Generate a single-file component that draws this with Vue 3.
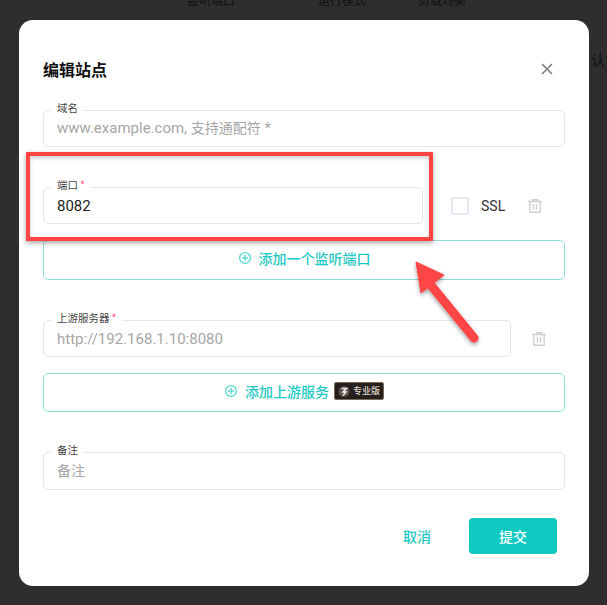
<script setup>
const fields = { domain: '域名' }
</script>

<template>
  <div class="page">
    <div class="behind">
      <span class="b1">监听端口</span><span class="b2">运行模式</span><span class="b3">负载均衡</span>
    </div>
    <div class="behind-right">认证</div>

    <div class="modal">
      <div class="head">
        <h2>编辑站点</h2>
        <svg class="close" width="14" height="14" viewBox="0 0 14 14"><path d="M2 2l10 10M12 2L2 12" stroke="#7a7a7a" stroke-width="1.5" fill="none"/></svg>
      </div>

      <div class="field domain">
        <label>{{ fields.domain }}</label>
        <span class="ph">www.example.com, <em>支持通配符</em> *</span>
      </div>

      <div class="row port-row">
        <div class="field port">
          <label>端口<i>*</i></label>
          <span class="val">8082</span>
        </div>
        <span class="check"></span>
        <span class="ssl">SSL</span>
        <svg class="trash t1" width="14" height="14" viewBox="0 0 14 14"><path d="M0 2.5h14M4.5 2.5V.7h5v1.8M1.8 2.5v10.8h10.4V2.5M5.5 5v5.5M8.5 5v5.5" stroke="#cfcfcf" stroke-width="1.4" fill="none"/></svg>
      </div>

      <div class="add add1">
        <svg width="14" height="14" viewBox="0 0 14 14"><circle cx="7" cy="7" r="5.4" stroke="#5fd9d3" stroke-width="1.4" fill="none"/><path d="M7 4v6M4 7h6" stroke="#5fd9d3" stroke-width="1.4"/></svg>
        <span>添加一个监听端口</span>
      </div>

      <div class="row up-row">
        <div class="field upstream">
          <label>上游服务器<i>*</i></label>
          <span class="ph">http://192.168.1.10:8080</span>
        </div>
        <svg class="trash t2" width="14" height="14" viewBox="0 0 14 14"><path d="M0 2.5h14M4.5 2.5V.7h5v1.8M1.8 2.5v10.8h10.4V2.5M5.5 5v5.5M8.5 5v5.5" stroke="#cfcfcf" stroke-width="1.4" fill="none"/></svg>
      </div>

      <div class="add add2">
        <svg width="14" height="14" viewBox="0 0 14 14"><circle cx="7" cy="7" r="5.4" stroke="#5fd9d3" stroke-width="1.4" fill="none"/><path d="M7 4v6M4 7h6" stroke="#5fd9d3" stroke-width="1.4"/></svg>
        <span>添加上游服务</span>
        <span class="pro">
          <svg width="12" height="13" viewBox="0 0 12 13"><circle cx="6" cy="6.5" r="5.5" fill="#5c5048"/><path d="M3.5 3.5h5L5 7h3L5 10.5" stroke="#f3ece2" stroke-width="1.5" fill="none"/></svg>
          <b>专业版</b>
        </span>
      </div>

      <div class="field note">
        <label>备注</label>
        <span class="ph"><em>备注</em></span>
      </div>

      <div class="foot">
        <span class="cancel">取消</span>
        <span class="submit">提交</span>
      </div>
    </div>

    <div class="mark"></div>
    <svg class="arrow" width="90" height="110" viewBox="0 0 90 110">
      <defs>
        <filter id="sh" x="-30%" y="-30%" width="160%" height="160%"><feDropShadow dx="0" dy="2" stdDeviation="2" flood-color="#000" flood-opacity="0.4"/></filter>
      </defs>
      <g filter="url(#sh)">
        <path d="M73 88L29 34" stroke="#ff4444" stroke-width="9" stroke-linecap="round" fill="none"/>
        <path d="M15 12L43 25L20 43Z" fill="#ff4444" stroke="#ff4444" stroke-width="1" stroke-linejoin="round"/>
      </g>
    </svg>
  </div>
</template>

<style>
html, body { margin: 0; background: #2d2e2d; }
</style>

<style scoped>
.page {
  position: relative;
  width: 607px;
  height: 605px;
  overflow: hidden;
  background: #2d2e2d;
  font-family: "Noto Sans CJK SC", "Liberation Sans", sans-serif;
}
.behind span { position: absolute; top: -9px; font-size: 12px; line-height: 18px; color: #111; white-space: nowrap; }
.b1 { left: 187px; }
.b2 { left: 318px; }
.b3 { left: 418px; }
.behind-right { position: absolute; left: 591px; top: 50px; font-size: 14px; line-height: 18px; color: #111; white-space: nowrap; }

.modal {
  position: absolute;
  left: 19px;
  top: 20px;
  width: 570px;
  height: 566px;
  box-sizing: border-box;
  padding: 0 24px;
  background: #fff;
  border-radius: 14px;
}
.head {
  display: flex;
  align-items: center;
  justify-content: space-between;
  height: 40px;
  margin-top: 29px;
}
.head h2 { margin: 0; font-size: 16px; line-height: 40px; font-weight: 700; color: #111; }
.close { margin-right: 11px; }

.field {
  position: relative;
  box-sizing: border-box;
  height: 37px;
  border: 1px solid #e3e7ef;
  border-radius: 5px;
  padding-left: 13px;
  display: flex;
  align-items: center;
}
.field label {
  position: absolute;
  left: 7px;
  top: -10px;
  padding: 0 6px;
  background: linear-gradient(to bottom, transparent 0 8px, #fff 8px);
  font-size: 10.5px;
  line-height: 14px;
  color: #444;
  white-space: nowrap;
}
.field label i { font-style: normal; color: #ff4d7d; margin-left: 2px; }
.ph { color: #a6a6a6; font-size: 15px; line-height: 20px; font-family: Roboto, "Noto Sans CJK SC", sans-serif; }
.ph em { font-style: normal; font-size: 14px; }
.val { color: #222; font-size: 15px; font-family: Roboto, sans-serif; }

.domain { margin-top: 21px; padding-bottom: 2px; }
.row { display: flex; align-items: center; }
.port-row { margin-top: 40px; }
.port { width: 380px; }
.check {
  box-sizing: border-box;
  width: 18px;
  height: 18px;
  margin-left: 28px;
  border: 2px solid #e3e7ef;
  border-radius: 2px;
}
.ssl { margin-left: 12px; font-size: 14px; line-height: 20px; padding-top: 1px; color: #333; font-family: Roboto, sans-serif; }
.t1 { margin-left: 23px; }
.up-row { margin-top: 40px; }
.upstream { width: 468px; }
.t2 { margin-left: 21px; }

.add {
  box-sizing: border-box;
  display: flex;
  align-items: center;
  justify-content: center;
  border: 1px solid #8fe0da;
  border-radius: 5px;
  color: #1fc9c3;
  font-size: 14px;
  font-weight: 500;
}
.add svg { flex: none; }
.add > span:first-of-type { margin-left: 7px; }
.add1 { height: 40px; margin-top: 16px; padding-bottom: 5px; }
.add2 { height: 39px; margin-top: 16px; padding-bottom: 3px; }
.pro {
  display: inline-flex;
  align-items: center;
  gap: 3px;
  height: 18px;
  margin-left: 5px;
  padding: 0 3px;
  border-radius: 2px;
  background: #241f1c;
  border: 1px solid #7b6a58;
  box-sizing: border-box;
}
.pro b { font-size: 9px; font-weight: 500; color: #e0d8cc; line-height: 12px; }
.note { margin-top: 40px; height: 38px; padding-bottom: 1px; }

.foot {
  display: flex;
  align-items: center;
  justify-content: flex-end;
  margin-top: 28px;
  padding-right: 8px;
}
.cancel { color: #1fc9c3; font-size: 14px; font-weight: 500; margin-right: 38px; }
.submit {
  width: 88px;
  height: 36px;
  line-height: 36px;
  text-align: center;
  background: #10c9c3;
  border-radius: 4px;
  color: #fff;
  font-size: 14px;
  font-weight: 500;
}

.mark {
  position: absolute;
  left: 26px;
  top: 152px;
  width: 407px;
  height: 89px;
  box-sizing: border-box;
  border: 4px solid #ff4444;
  box-shadow: 0 2px 5px rgba(0, 0, 0, 0.35), inset 0 2px 4px rgba(0, 0, 0, 0.2);
}
.arrow { position: absolute; left: 401px; top: 250px; }
</style>
